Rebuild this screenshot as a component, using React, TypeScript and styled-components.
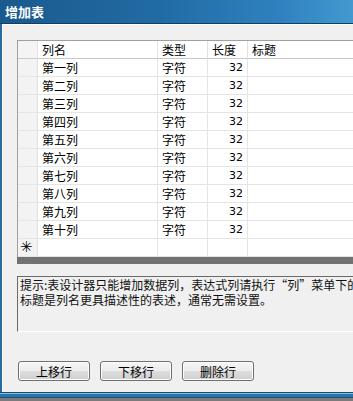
import React from "react";
import styled, { createGlobalStyle } from "styled-components";

const GlobalStyle = createGlobalStyle`
    html, body {
        margin: 0;
        padding: 0;
        background: #7b7b7b;
        overflow: hidden;
    }
`;

const columns = [
    { key: "name", label: "列名" },
    { key: "type", label: "类型" },
    { key: "len", label: "长度" },
    { key: "title", label: "标题" },
];

const rows = ["第一列", "第二列", "第三列", "第四列", "第五列", "第六列", "第七列", "第八列", "第九列", "第十列"];

const App = () => {
    return (
        <>
            <GlobalStyle />
            <Window>
                <TitleBar>增加表</TitleBar>
                <Body>
                    <Grid>
                        <HeadCell $rowHead />
                        {columns.map((c) => (
                            <HeadCell key={c.key}>{c.label}</HeadCell>
                        ))}
                        {rows.map((r) => (
                            <React.Fragment key={r}>
                                <RowHead />
                                <Cell>{r}</Cell>
                                <Cell>字符</Cell>
                                <Cell $right>32</Cell>
                                <Cell />
                            </React.Fragment>
                        ))}
                        <RowHead>{"\u2733\uFE0E"}</RowHead>
                        <Cell />
                        <Cell />
                        <Cell />
                        <Cell />
                    </Grid>
                    <ScrollBand />
                    <HintBox>
                        <HintLine>提示:表设计器只能增加数据列，表达式列请执行“列”菜单下的</HintLine>
                        <HintLine>标题是列名更具描述性的表述，通常无需设置。</HintLine>
                    </HintBox>
                    <ButtonRow>
                        <Button>上移行</Button>
                        <Button>下移行</Button>
                        <Button>删除行</Button>
                    </ButtonRow>
                </Body>
                <BottomEdge />
            </Window>
        </>
    );
};

export default App;

const Window = styled.div`
    width: 353px;
    height: 398px;
    display: flex;
    flex-direction: column;
    overflow: hidden;
    font-family: "Noto Sans CJK SC", "Liberation Sans", sans-serif;
`;

const TitleBar = styled.div`
    height: 24px;
    flex: none;
    box-sizing: border-box;
    padding-left: 5px;
    display: flex;
    align-items: center;
    color: #ffffff;
    font-size: 13px;
    font-weight: bold;
    background: linear-gradient(90deg, #1a5a8d 0%, #216ba4 45%, #2f82bf 80%, #4499d0 100%);
    border-bottom: 1px solid #0f3e66;
`;

const Body = styled.div`
    flex: 1;
    min-height: 0;
    display: flex;
    flex-direction: column;
    background: #f0f0f0;
    border-left: 2px solid #2a6a9d;
    box-shadow: inset 1px 1px 0 #ffffff;
    padding: 16px 0 0 15px;
`;

const Grid = styled.div`
    display: grid;
    grid-template-columns: 20px 120px 50px 40px 1fr;
    grid-auto-rows: 18px;
    width: 360px;
    border-top: 1px solid #a0a0a0;
    border-left: 1px solid #a0a0a0;
    background: #ffffff;
    font-size: 12px;
    color: #000000;
`;

const HeadCell = styled.div<{ $rowHead?: boolean }>`
    box-sizing: border-box;
    display: flex;
    align-items: center;
    padding-left: 4px;
    background: ${(p) => (p.$rowHead ? "#f4f4f4" : "#ffffff")};
    border-right: 1px solid #e2e2e2;
    border-bottom: 1px solid #c9c9c9;
    white-space: nowrap;
`;

const RowHead = styled.div`
    box-sizing: border-box;
    display: flex;
    align-items: center;
    padding-left: 2px;
    background: #f3f3f3;
    border-right: 1px solid #e0e0e0;
    border-bottom: 1px solid #e6e6e6;
    font-family: "DejaVu Sans", sans-serif;
    font-size: 15px;
    line-height: 1;
    color: #000000;
`;

const Cell = styled.div<{ $right?: boolean }>`
    box-sizing: border-box;
    display: flex;
    align-items: center;
    justify-content: ${(p) => (p.$right ? "flex-end" : "flex-start")};
    padding: ${(p) => (p.$right ? "0 4px 0 0" : "0 0 0 4px")};
    border-right: 1px solid #e4e4e4;
    border-bottom: 1px solid #e4e4e4;
    font-family: ${(p) => (p.$right ? "\"DejaVu Sans\", sans-serif" : "inherit")};
    font-size: ${(p) => (p.$right ? "11px" : "12px")};
    white-space: nowrap;
`;

const ScrollBand = styled.div`
    height: 7px;
    width: 360px;
    background: #727272;
`;

const HintBox = styled.div`
    margin-top: 12px;
    height: 56px;
    width: 360px;
    box-sizing: border-box;
    border-top: 1px solid #6a6a6a;
    border-left: 1px solid #6a6a6a;
    border-bottom: 1px solid #ffffff;
    padding-left: 2px;
    font-size: 12px;
    line-height: 15px;
    color: #111111;
`;

const HintLine = styled.div`
    white-space: nowrap;
`;

const ButtonRow = styled.div`
    margin-top: 29px;
    display: flex;
    gap: 10px;
    padding-left: 1px;
`;

const Button = styled.div`
    width: 72px;
    height: 20px;
    box-sizing: border-box;
    border: 1px solid #707070;
    border-radius: 3px;
    background: linear-gradient(180deg, #f6f6f6 0%, #ebebeb 50%, #dddddd 51%, #cfcfcf 100%);
    box-shadow: inset 0 0 0 1px #fcfcfc;
    display: flex;
    align-items: center;
    justify-content: center;
    font-size: 12px;
    color: #000000;
`;

const BottomEdge = styled.div`
    height: 6px;
    flex: none;
    background: linear-gradient(180deg, #164a77 0 1px, #7cc0dd 1px 2px, #2c73a9 2px 5px, #1a4f7c 5px 6px);
`;
